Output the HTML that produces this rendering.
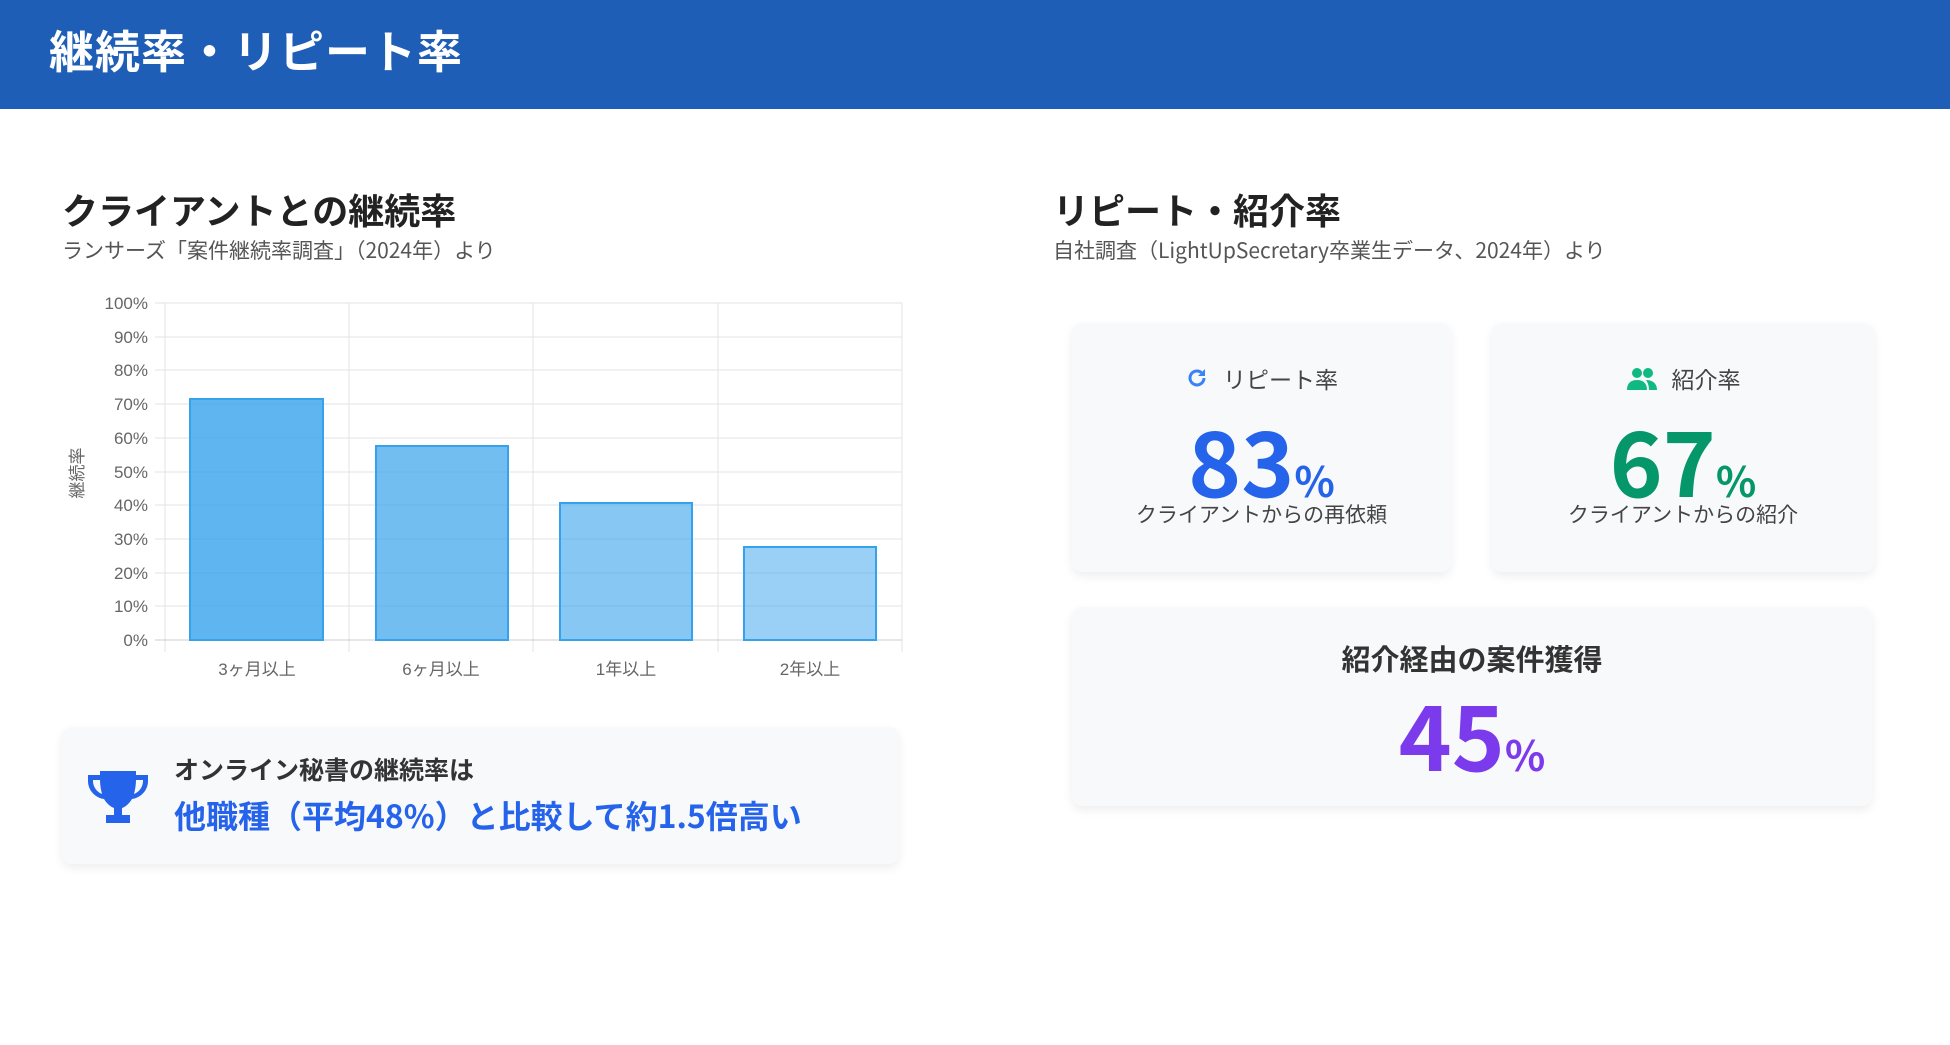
<!DOCTYPE html>
<html><head><meta charset="utf-8"><style>
*{margin:0;padding:0;box-sizing:border-box}
body{width:1950px;height:1045px;background:#fff;font-family:"Liberation Sans","Noto Sans CJK JP",sans-serif;position:relative;overflow:hidden;color:#333}
.hdr{position:absolute;left:0;top:0;width:1950px;height:109px;background:#1e5eb6}
.hdr h1{position:absolute;left:49px;top:16px;font-size:45px;font-weight:700;color:#fff;font-family:"Noto Sans CJK JP",sans-serif;letter-spacing:1px}
.t{position:absolute;font-size:36px;font-weight:700;color:#222;font-family:"Noto Sans CJK JP",sans-serif}
.s{position:absolute;font-size:21px;color:#555;font-family:"Noto Sans CJK JP",sans-serif}
.card{position:absolute;background:#f8f9fb;border-radius:10px;box-shadow:0 4px 10px rgba(0,0,0,0.07)}
.abs{position:absolute;font-family:"Noto Sans CJK JP",sans-serif}
.c{text-align:center;width:100%}
</style></head><body>
<div class="hdr"><h1>継続率・リピート率</h1></div>

<div class="t" style="left:62px;top:183px">クライアントとの継続率</div>
<div class="s" style="left:62px;top:235px">ランサーズ「案件継続率調査」（2024年）より</div>

<svg style="position:absolute;left:0;top:280px" width="940" height="420" viewBox="0 280 940 420">
<g stroke="#e3e3e3" stroke-width="1">
<line x1="155" y1="303" x2="902" y2="303"/><line x1="155" y1="337" x2="902" y2="337"/><line x1="155" y1="370" x2="902" y2="370"/><line x1="155" y1="404" x2="902" y2="404"/><line x1="155" y1="438" x2="902" y2="438"/><line x1="155" y1="472" x2="902" y2="472"/><line x1="155" y1="505" x2="902" y2="505"/><line x1="155" y1="539" x2="902" y2="539"/><line x1="155" y1="573" x2="902" y2="573"/><line x1="155" y1="606" x2="902" y2="606"/>
<line x1="165" y1="303" x2="165" y2="652"/><line x1="349" y1="303" x2="349" y2="652"/><line x1="533" y1="303" x2="533" y2="652"/><line x1="718" y1="303" x2="718" y2="652"/><line x1="902" y1="303" x2="902" y2="652"/>
</g>
<line x1="155" y1="640" x2="902" y2="640" stroke="#ccc"/>
<rect x="190" y="399" width="133" height="241" fill="rgba(54,162,235,0.8)" stroke="#36a2eb" stroke-width="2"/>
<rect x="376" y="446" width="132" height="194" fill="rgba(54,162,235,0.7)" stroke="#36a2eb" stroke-width="2"/>
<rect x="560" y="503" width="132" height="137" fill="rgba(54,162,235,0.6)" stroke="#36a2eb" stroke-width="2"/>
<rect x="744" y="547" width="132" height="93" fill="rgba(54,162,235,0.5)" stroke="#36a2eb" stroke-width="2"/>
<g font-family="Liberation Sans,Noto Sans CJK JP,sans-serif" font-size="17" fill="#666" text-anchor="end">
<text x="148" y="309">100%</text><text x="148" y="343">90%</text><text x="148" y="376">80%</text><text x="148" y="410">70%</text><text x="148" y="444">60%</text><text x="148" y="478">50%</text><text x="148" y="511">40%</text><text x="148" y="545">30%</text><text x="148" y="579">20%</text><text x="148" y="612">10%</text><text x="148" y="646">0%</text>
</g>
<g font-family="Liberation Sans,Noto Sans CJK JP,sans-serif" font-size="17" fill="#666" text-anchor="middle">
<text x="257" y="675">3ヶ月以上</text><text x="441" y="675">6ヶ月以上</text><text x="626" y="675">1年以上</text><text x="810" y="675">2年以上</text>
</g>
<text transform="translate(83,473) rotate(-90)" font-family="Noto Sans CJK JP,sans-serif" font-size="17" fill="#666" text-anchor="middle">継続率</text>
</svg>

<div class="card" style="left:62px;top:727px;width:837px;height:137px">
<svg style="position:absolute;left:24px;top:42px" width="64" height="56" viewBox="0 0 64 56">
<path fill="#2563eb" d="M14 2h36v4h12v6c0 10-8 17-16 18-3 5-7 8-10 9v7h8v8H20v-8h8v-7c-3-1-7-4-10-9C10 29 2 22 2 12V6h12zM7 11v1c0 6 4 11 9 13-1-4-2-9-2-14zm50 0h-7c0 5-1 10-2 14 5-2 9-7 9-13z"/>
</svg>
<div class="abs" style="left:112px;top:24px;font-size:25px;font-weight:700;color:#333">オンライン秘書の継続率は</div>
<div class="abs" style="left:112px;top:65px;font-size:32px;font-weight:700;color:#2563eb">他職種（平均48%）と比較して約1.5倍高い</div>
</div>

<div class="t" style="left:1053px;top:183px">リピート・紹介率</div>
<div class="s" style="left:1053px;top:235px">自社調査（LightUpSecretary卒業生データ、2024年）より</div>

<div class="card" style="left:1072px;top:323px;width:379px;height:249px">
<div class="abs c" style="top:38px;font-size:23px;color:#444"><svg width="24" height="24" viewBox="0 0 24 24" style="vertical-align:-3px;margin-right:14px"><path d="M19 11a7 7 0 1 1-2.5-5.4" fill="none" stroke="#3b82f6" stroke-width="3"/><path d="M20 2v7h-7z" fill="#3b82f6"/></svg>リピート率</div>
<div class="abs c" style="top:86px;font-size:90px;font-weight:700;color:#2563eb;line-height:1.1">83<span style="font-size:42px">%</span></div>
<div class="abs c" style="top:176px;font-size:21px;color:#444">クライアントからの再依頼</div>
</div>

<div class="card" style="left:1492px;top:323px;width:382px;height:249px">
<div class="abs c" style="top:38px;font-size:23px;color:#444"><svg width="32" height="24" viewBox="0 0 32 24" style="vertical-align:-3px;margin-right:14px"><circle cx="11" cy="6" r="5" fill="#10b981"/><circle cx="22" cy="6" r="5" fill="#10b981"/><path d="M1 23c0-7 4-10 10-10s10 3 10 10z" fill="#10b981"/><path d="M20 13c6 0 11 3 11 10h-8c0-4-1-7-3-10z" fill="#10b981"/></svg>紹介率</div>
<div class="abs c" style="top:86px;font-size:90px;font-weight:700;color:#059669;line-height:1.1">67<span style="font-size:42px">%</span></div>
<div class="abs c" style="top:176px;font-size:21px;color:#444">クライアントからの紹介</div>
</div>

<div class="card" style="left:1072px;top:607px;width:800px;height:199px">
<div class="abs c" style="top:30px;font-size:29px;font-weight:700;color:#333">紹介経由の案件獲得</div>
<div class="abs c" style="top:76px;font-size:90px;font-weight:700;color:#7c3aed;line-height:1.1">45<span style="font-size:42px">%</span></div>
</div>
</body></html>
